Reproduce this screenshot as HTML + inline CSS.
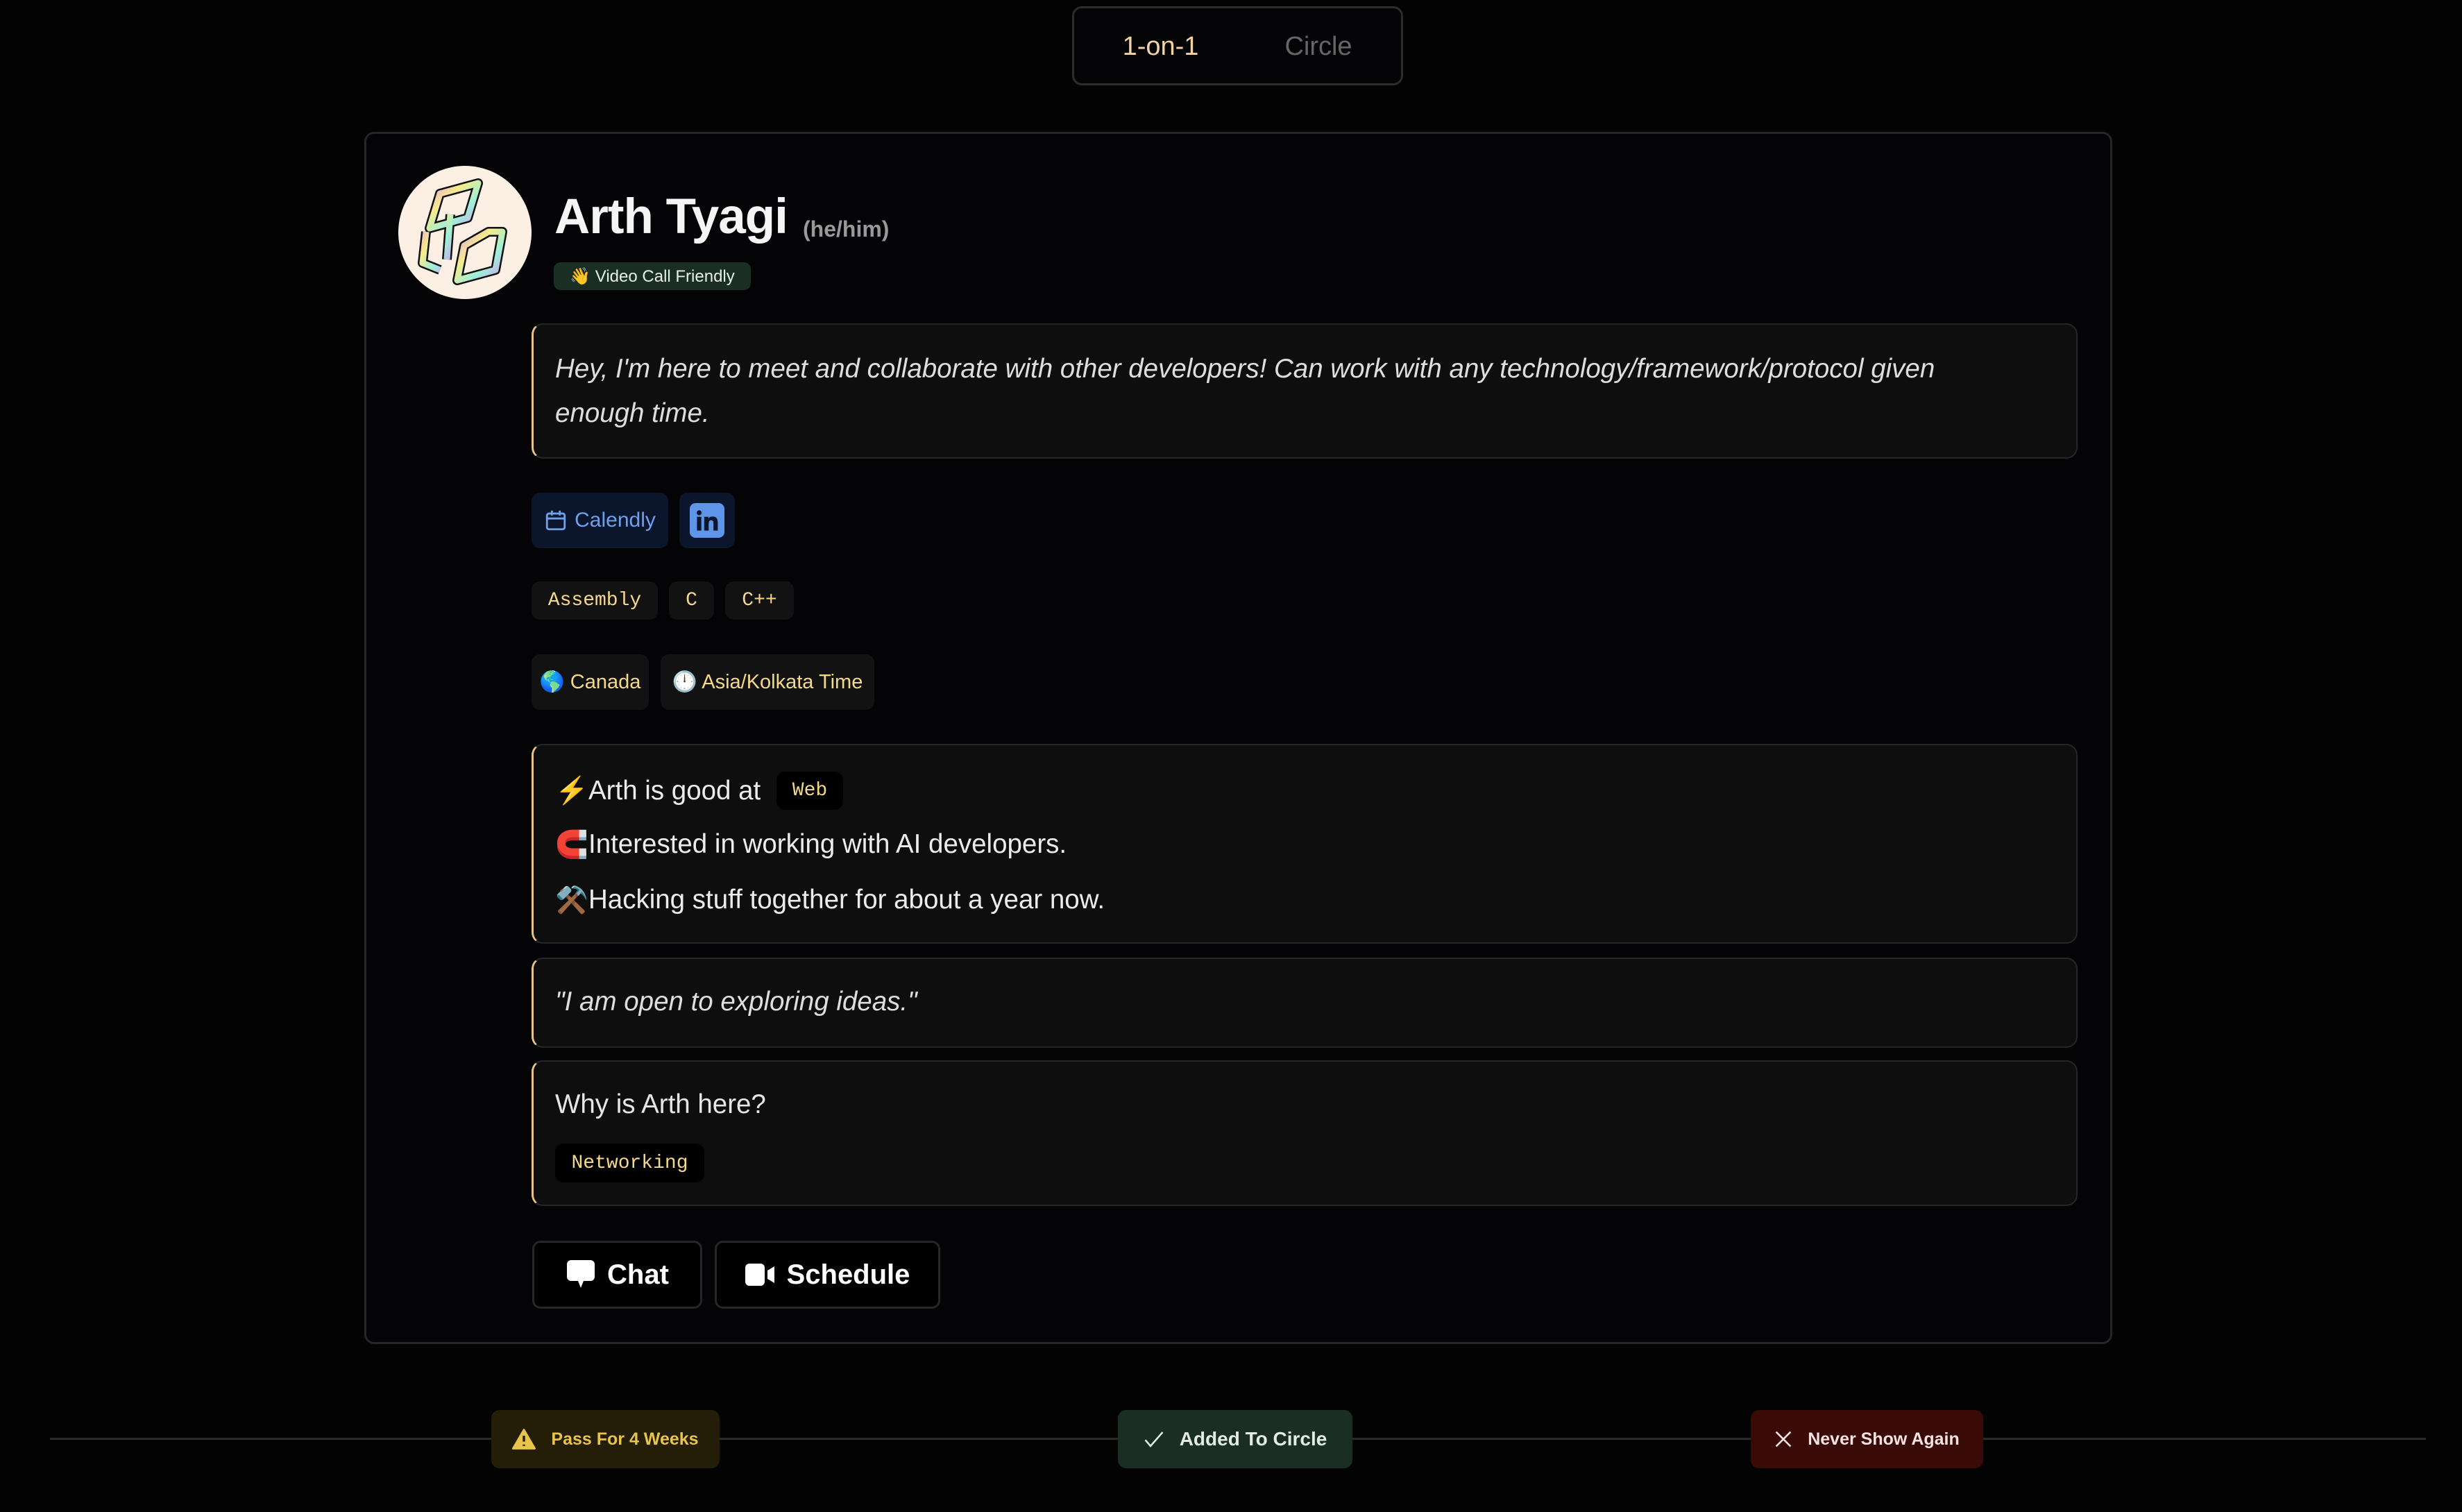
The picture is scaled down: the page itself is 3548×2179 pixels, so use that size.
<!DOCTYPE html>
<html><head><meta charset="utf-8"><style>
*{box-sizing:border-box;margin:0;padding:0}
body{width:3548px;height:2179px;background:#030304;position:relative;overflow:hidden;font-family:"Liberation Sans","Noto Sans CJK JP",sans-serif;color:#e6e6e6}
.a{position:absolute}
.flex{display:flex;align-items:center}
.mono{font-family:"Liberation Mono","DejaVu Sans Mono",monospace}
.box{position:absolute;left:766px;width:2228px;background:#0e0e0e;border:2px solid #262626;border-left:3px solid #e6c48a;border-radius:16px}
.chip{position:absolute;border-radius:12px;display:flex;align-items:center;justify-content:center}
.tag{background:#121212;color:#f5d98a;font-size:28px}
.btn{position:absolute;top:1788px;height:98px;border:3px solid #262626;border-radius:12px;background:#000;display:flex;align-items:center;justify-content:center;gap:16px;color:#fff;font-weight:bold;font-size:40px}
.bb{position:absolute;top:2032px;height:84px;border-radius:12px;display:flex;align-items:center;justify-content:center;gap:22px;font-weight:bold;font-size:26px}
.ln{font-size:38.5px;color:#ececec}
.ln span{width:44px;margin-right:4px}
</style></head><body>

<div class="a" style="left:1545px;top:9px;width:477px;height:114px;border:3px solid #2c2c2c;border-radius:14px;background:#040406"></div>
<div class="a" style="left:1600px;top:46px;width:145px;text-align:center;font-size:38px;color:#f3d2a4">1-on-1</div>
<div class="a" style="left:1830px;top:46px;width:140px;text-align:center;font-size:38px;color:#666">Circle</div>

<div class="a" style="left:525px;top:190px;width:2519px;height:1747px;border:3px solid #262626;border-radius:14px;background:#040406"></div>

<div class="a" style="left:574px;top:239px;width:192px;height:192px;border-radius:50%;background:#fcefe4;overflow:hidden">
<svg width="192" height="192" viewBox="0 0 192 192">
<defs><linearGradient id="g" x1="0" y1="0" x2="1" y2="1"><stop offset="0" stop-color="#e89cf0"/><stop offset=".35" stop-color="#f6ec8a"/><stop offset=".65" stop-color="#9ef0d8"/><stop offset="1" stop-color="#d49cf0"/></linearGradient></defs>
<g fill="none" stroke="#111" stroke-width="14" stroke-linejoin="round"><path d="M60 40 L115 25 L100 75 L45 90 Z"/><path d="M130 95 L150 95 L140 150 L85 165 L95 115 Z"/><path d="M40 95 L35 140 L60 150 M75 70 L70 135"/></g>
<g fill="none" stroke="url(#g)" stroke-width="9" stroke-linejoin="round"><path d="M60 40 L115 25 L100 75 L45 90 Z"/><path d="M130 95 L150 95 L140 150 L85 165 L95 115 Z"/><path d="M40 95 L35 140 L60 150 M75 70 L70 135"/></g>
</svg></div>

<div class="a" style="left:799px;top:272px;font-size:71px;font-weight:bold;color:#f5f5f5;letter-spacing:-1px">Arth Tyagi</div>
<div class="a" style="left:1157px;top:312px;font-size:32px;font-weight:bold;color:#999">(he/him)</div>
<div class="chip" style="left:798px;top:378px;width:284px;height:40px;background:#1b2e24;color:#e6efe6;font-size:24px;border-radius:10px">👋 Video Call Friendly</div>

<div class="box" style="top:466px;height:195px"></div>
<div class="a" style="left:800px;top:500px;width:2050px;font-size:38.5px;font-style:italic;line-height:64px;color:#dedede">Hey, I'm here to meet and collaborate with other developers! Can work with any technology/framework/protocol given enough time.</div>

<div class="chip" style="left:766px;top:710px;width:197px;height:80px;background:#0b162c;color:#6fa0e8;font-size:30px;gap:10px">
<svg width="34" height="34" viewBox="0 0 24 24" fill="none" stroke="#6fa0e8" stroke-width="2"><rect x="3" y="5" width="18" height="16" rx="2"/><path d="M3 10h18M8 2v5M16 2v5"/></svg>Calendly</div>
<div class="chip" style="left:979px;top:710px;width:80px;height:80px;background:#0b162c">
<svg width="50" height="50" viewBox="0 0 24 24"><rect width="24" height="24" rx="4" fill="#5e95e8"/><path d="M5 9.5h3V19H5zM6.5 5a1.7 1.7 0 1 1 0 3.4 1.7 1.7 0 0 1 0-3.4zM10 9.5h2.9v1.3c.4-.8 1.4-1.5 2.9-1.5 3 0 3.6 2 3.6 4.6V19h-3v-4.6c0-1.1 0-2.5-1.5-2.5s-1.8 1.2-1.8 2.4V19H10z" fill="#0b162c"/></svg></div>

<div class="chip tag mono" style="left:766px;top:838px;width:182px;height:55px">Assembly</div>
<div class="chip tag mono" style="left:964px;top:838px;width:65px;height:55px">C</div>
<div class="chip tag mono" style="left:1045px;top:838px;width:99px;height:55px">C++</div>

<div class="chip tag" style="left:766px;top:943px;width:169px;height:80px;font-size:29px">🌎 Canada</div>
<div class="chip tag" style="left:952px;top:943px;width:308px;height:80px;font-size:29px">🕛 Asia/Kolkata Time</div>

<div class="box" style="top:1072px;height:288px"></div>
<div class="a flex ln" style="left:800px;top:1112px;height:55px"><span>⚡</span>Arth is good at</div>
<div class="chip mono" style="left:1119px;top:1112px;width:96px;height:55px;background:#000;color:#f5d98a;font-size:28px">Web</div>
<div class="a flex ln" style="left:800px;top:1192px;height:50px"><span>🧲</span>Interested in working with AI developers.</div>
<div class="a flex ln" style="left:800px;top:1272px;height:50px"><span>⚒️</span>Hacking stuff together for about a year now.</div>

<div class="box" style="top:1380px;height:130px"></div>
<div class="a" style="left:800px;top:1422px;font-size:38.5px;font-style:italic;color:#dedede">"I am open to exploring ideas."</div>

<div class="box" style="top:1528px;height:210px"></div>
<div class="a" style="left:800px;top:1570px;font-size:38.5px;color:#e6e6e6">Why is Arth here?</div>
<div class="chip mono" style="left:800px;top:1648px;width:215px;height:56px;background:#000;color:#f5d98a;font-size:28px">Networking</div>

<div class="btn" style="left:767px;width:245px">
<svg width="44" height="46" viewBox="0 0 22 23"><path d="M4 1h14a3 3 0 0 1 3 3v9a3 3 0 0 1-3 3h-5l-2 5-2-5H4a3 3 0 0 1-3-3V4a3 3 0 0 1 3-3z" fill="#fff"/></svg>Chat</div>
<div class="btn" style="left:1030px;width:325px">
<svg width="44" height="36" viewBox="0 0 22 18"><rect x="0" y="1" width="14" height="16" rx="3" fill="#fff"/><path d="M16 6l5-3v12l-5-3z" fill="#fff"/></svg>Schedule</div>

<div class="a" style="left:72px;top:2072px;width:3424px;height:3px;background:#2a2a2a"></div>
<div class="bb" style="left:708px;width:329px;background:#241d08;color:#e8c44a;font-size:25px">
<svg width="34" height="30" viewBox="0 0 24 21"><path d="M12 1L23 20H1z" fill="#e8c44a" stroke="#e8c44a" stroke-width="2" stroke-linejoin="round"/><path d="M12 7v6M12 16v1.5" stroke="#241d08" stroke-width="2.4"/></svg>Pass For 4 Weeks</div>
<div class="bb" style="left:1611px;width:338px;background:#1b2e24;color:#e2ece2;font-size:28px">
<svg width="30" height="26" viewBox="0 0 24 20"><path d="M2 11l6 7L22 2" fill="none" stroke="#e2ece2" stroke-width="2"/></svg>Added To Circle</div>
<div class="bb" style="left:2523px;width:335px;background:#3a0a06;color:#f2e2e2;font-size:25px">
<svg width="26" height="26" viewBox="0 0 20 20"><path d="M2 2l16 16M18 2L2 18" stroke="#f2e2e2" stroke-width="2"/></svg>Never Show Again</div>
</body></html>
